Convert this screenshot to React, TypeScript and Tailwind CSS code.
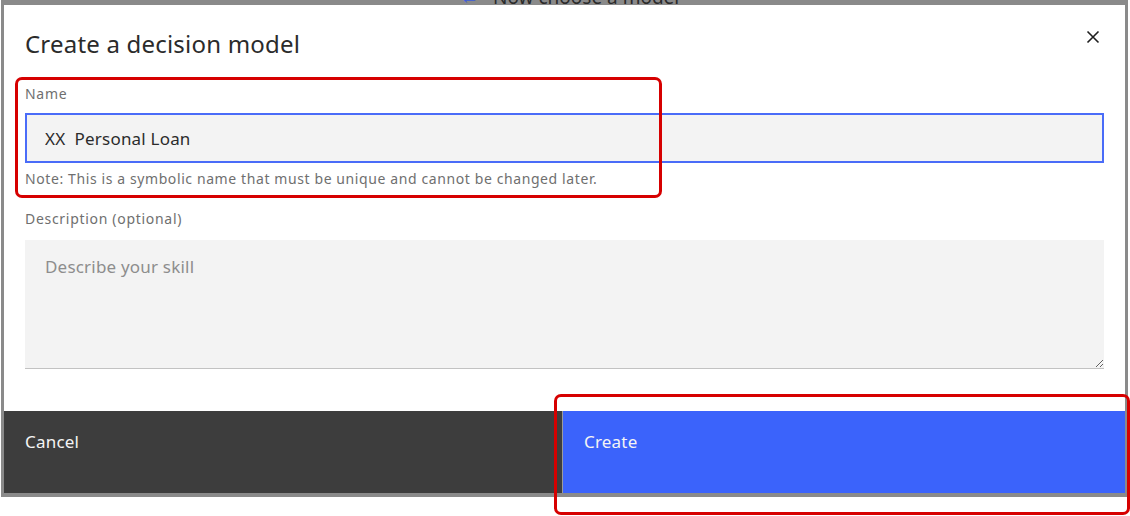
import React from "react";

export default function App() {
  return (
    <div className="relative w-[1130px] h-[516px] bg-white overflow-hidden font-['Noto_Sans',sans-serif]">
      <div className="relative ml-px w-[1127px] h-[497px] bg-[#8a8a8a] pt-[5px] pl-[3px] pr-[3px] pb-[4px]">
        <div className="absolute left-0 top-0 w-full h-[5px] overflow-hidden">
          <div className="absolute left-[459px] top-[-12px] flex items-center gap-[14px] text-[19px] leading-[19px] text-[#2a2a2a] whitespace-nowrap">
            <span className="text-[#3b5bd9]">←</span>
            <span>Now choose a model</span>
          </div>
        </div>
        <div className="flex h-full flex-col bg-white">
          <div className="relative flex-1 px-[21px] pt-[23px]">
            <h2 className="text-[24px] leading-[32px] tracking-[0.2px] text-[#2b2b2b] font-normal">Create a decision model</h2>
            <button className="absolute right-[24px] top-[24px] w-[16px] h-[16px] flex items-center justify-center" aria-label="Close">
              <svg width="14" height="14" viewBox="0 0 14 14" fill="none" stroke="#1f1f1f" strokeWidth="1.6">
                <path d="M1.5 1.5 L12.5 12.5 M12.5 1.5 L1.5 12.5" />
              </svg>
            </button>
            <label className="mt-[26px] block text-[14px] leading-[16px] tracking-[0.7px] text-[#6f6f6f]">Name</label>
            <input
              readOnly
              value="XX  Personal Loan"
              className="mt-[11px] block w-full h-[50px] bg-[#f3f3f3] border-2 border-[#4a6cf8] px-[18px] text-[17px] tracking-[0.2px] text-[#2b2b2b] outline-none whitespace-pre"
            />
            <p className="mt-[8px] text-[14px] leading-[16px] tracking-[0.6px] text-[#6f6f6f]">
              Note: This is a symbolic name that must be unique and cannot be changed later.
            </p>
            <label className="mt-[24px] block text-[14px] leading-[16px] tracking-[0.7px] text-[#6f6f6f]">Description (optional)</label>
            <textarea
              placeholder="Describe your skill"
              className="mt-[13px] block w-full h-[129px] bg-[#f3f3f3] border-b border-[#c2c2c2] px-[20px] pt-[16px] text-[17px] leading-[22px] tracking-[0.2px] text-[#2b2b2b] placeholder:text-[#8d8d8d] outline-none resize-y"
            />
          </div>
          <div className="flex h-[82px]">
            <div className="w-[558px] bg-[#3d3d3d] px-[21px] pt-[20px] text-[17px] leading-[22px] tracking-[0.2px] text-[#f4f4f4]">Cancel</div>
            <div className="w-px bg-[#9a9a9a]" />
            <div className="flex-1 bg-[#3b63fb] px-[21px] pt-[20px] text-[17px] leading-[22px] tracking-[0.2px] text-[#f4f4f4]">Create</div>
          </div>
        </div>
      </div>
      <div className="absolute left-[15px] top-[77px] w-[647px] h-[121px] border-[3px] border-[#d60000] rounded-[7px] pointer-events-none" />
      <div className="absolute left-[554px] top-[394px] w-[576px] h-[121px] border-[3px] border-[#d60000] rounded-[7px] pointer-events-none" />
    </div>
  );
}
